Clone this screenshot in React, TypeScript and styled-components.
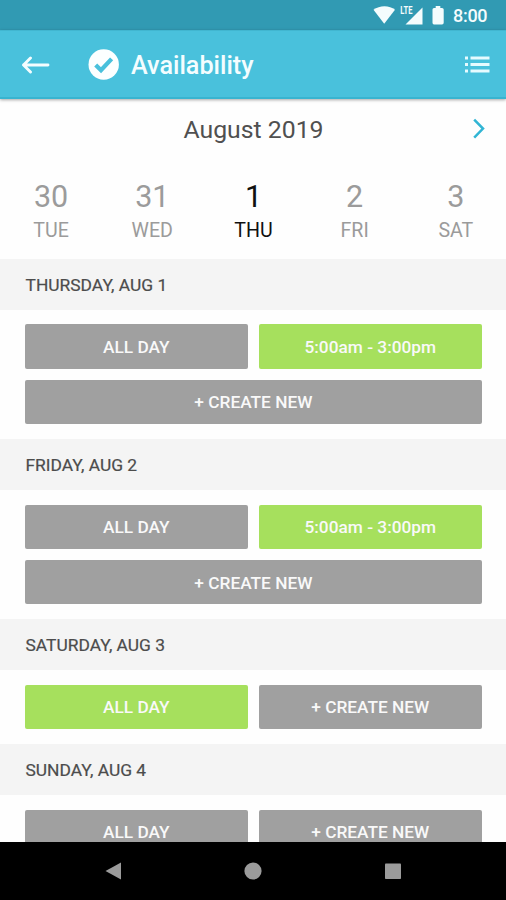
import React from "react";
import styled, { createGlobalStyle } from "styled-components";

const GlobalStyle = createGlobalStyle`
  * { box-sizing: border-box; }
  body { margin: 0; background: #fff; font-family: Roboto, "Liberation Sans", sans-serif; }
  button { font: inherit; border: 0; padding: 0; background: none; }
`;

const Screen = styled.div`
  width: 506px;
  height: 900px;
  display: flex;
  flex-direction: column;
  overflow: hidden;
  background: #fefefe;
`;

const StatusBar = styled.div`
  flex: none;
  height: 30px;
  display: flex;
  align-items: center;
  justify-content: flex-end;
  padding-right: 19px;
  background: #319ab3;
  color: #f4fcfd;
`;

const StatusIcons = styled.svg`
  display: block;
  margin-right: 8px;
`;

const Clock = styled.span`
  width: 34px;
  font-size: 18px;
  font-weight: 500;
  letter-spacing: -0.3px;
  line-height: 30px;
  padding-top: 2px;
  white-space: nowrap;
`;

const AppBar = styled.header`
  flex: none;
  height: 69px;
  display: flex;
  align-items: center;
  padding: 1px 16px 0 21px;
  background: #49c1dc;
  border-top: 1px solid #41b6d0;
  border-bottom: 2px solid #38b4d0;
  box-shadow: 0 1px 3px rgba(0, 0, 0, 0.35);
  z-index: 1;
`;

const IconButton = styled.button`
  display: flex;
`;

const NextButton = styled(IconButton)`
  padding-left: 7px;
`;

const Brand = styled.div`
  display: flex;
  align-items: center;
  gap: 12px;
  margin-left: 38px;
  flex: 1;
`;

const Title = styled.h1`
  margin: 0;
  padding-top: 2px;
  font-size: 25.2px;
  font-weight: 500;
  line-height: 30px;
  color: #f4fdff;
`;

const MonthBar = styled.div`
  flex: none;
  height: 60px;
  display: grid;
  grid-template-columns: 40px 1fr 40px;
  align-items: center;
`;

const Month = styled.h2`
  grid-column: 2;
  margin: 0;
  padding: 2px 0 0 1px;
  text-align: center;
  font-size: 24.8px;
  font-weight: 400;
  line-height: 30px;
  color: #505050;
`;

const Week = styled.div`
  flex: none;
  height: 99.5px;
  display: grid;
  grid-template-columns: repeat(5, 101.2px);
  padding: 20px 0 0 0.5px;
`;

const Day = styled.div<{ $active?: boolean }>`
  display: flex;
  flex-direction: column;
  align-items: center;
  color: ${(p) => (p.$active ? "#111" : "#9b9b9b")};
`;

const DayNumber = styled.span`
  font-size: 30.5px;
  line-height: 36px;
`;

const DayName = styled.span`
  margin-top: 4px;
  font-size: 19.6px;
  line-height: 24px;
`;

const Agenda = styled.main`
  flex: 1;
  min-height: 0;
  overflow: hidden;
`;

const DayHeading = styled.h3`
  margin: 0;
  height: 51.3px;
  padding-left: 25.5px;
  background: #f4f4f4;
  color: #4c4c4c;
  font-size: 17.4px;
  font-weight: 400;
  line-height: 52px;
  -webkit-text-stroke: 0.2px #4c4c4c;
`;

const Slots = styled.div`
  display: grid;
  grid-template-columns: 1fr 1fr;
  gap: 11.2px;
  padding: 14.5px 24.3px 14.7px 25px;
`;

const Slot = styled.button<{ $selected?: boolean; $wide?: boolean }>`
  height: 44.3px;
  border-radius: 2px;
  background: ${(p) => (p.$selected ? "#a6e05d" : "#a0a0a0")};
  color: #f9f9f9;
  font-size: 17.3px;
  font-weight: 500;
  line-height: 20px;
  padding-top: 1px;
  ${(p) => (p.$wide ? "grid-column: 1 / -1;" : "")}
`;

const NavBar = styled.nav`
  flex: none;
  height: 58px;
  display: flex;
  align-items: center;
  justify-content: space-between;
  padding: 0 104px;
  background: #000;
`;

const week = [
  { number: 30, name: "TUE" },
  { number: 31, name: "WED" },
  { number: 1, name: "THU", active: true },
  { number: 2, name: "FRI" },
  { number: 3, name: "SAT" },
];

type SlotData = { label: string; selected?: boolean; wide?: boolean };

const allDay = { label: "ALL DAY" };
const createNew = { label: "+ CREATE NEW" };
const shift = { label: "5:00am - 3:00pm", selected: true };

const agenda: { title: string; slots: SlotData[] }[] = [
  { title: "THURSDAY, AUG 1", slots: [allDay, shift, { ...createNew, wide: true }] },
  { title: "FRIDAY, AUG 2", slots: [allDay, shift, { ...createNew, wide: true }] },
  { title: "SATURDAY, AUG 3", slots: [{ ...allDay, selected: true }, createNew] },
  { title: "SUNDAY, AUG 4", slots: [allDay, createNew] },
];

const StatusGlyphs = () => (
  <StatusIcons width="72" height="30" viewBox="0 0 72 30" fill="currentColor">
    <path d="M0.5 9.8C6.5 4.9 16.5 4.9 22 9.8L11.2 23.8Z" />
    <path d="M49.5 7.5V24.5H32.5Z" />
    <path d="M62.7 6H67.3V8H69Q70.7 8 70.7 9.6V22.8Q70.7 24.5 69 24.5H61Q59.5 24.5 59.5 22.8V9.6Q59.5 8 61 8H62.7Z" />
    <text x="27.2" y="14.2" fontSize="10.5" fontWeight="700" textLength="12.2" lengthAdjust="spacingAndGlyphs">
      LTE
    </text>
  </StatusIcons>
);

const BackArrow = () => (
  <svg width="29" height="18" viewBox="0 0 29 18" fill="none" stroke="#f4fdff" strokeWidth="2.9" strokeLinecap="round" strokeLinejoin="round">
    <path d="M2.5 9H27M9.5 2L2.5 9L9.5 16" />
  </svg>
);

const CheckBadge = () => (
  <svg width="31" height="31" viewBox="0 0 31 31">
    <circle cx="15.7" cy="15.5" r="15.2" fill="#fcffff" />
    <path d="M7.7 16L13 21.2L23.6 9.9" fill="none" stroke="#49c1dc" strokeWidth="4.3" />
  </svg>
);

const ListIcon = () => (
  <svg width="25" height="18" viewBox="0 0 25 18" fill="#e6fbff">
    <path d="M0 0.5H3V3.5H0ZM0 7H3V10H0ZM0 13.5H3V16.5H0ZM5.5 0.5H24.5V3.5H5.5ZM5.5 7H24.5V10H5.5ZM5.5 13.5H24.5V16.5H5.5Z" />
  </svg>
);

const NextChevron = () => (
  <svg width="12" height="22" viewBox="0 0 12 22" fill="none" stroke="#31b5d4" strokeWidth="2.5">
    <path d="M1.2 1.6L10 10.6L1.2 19.6" />
  </svg>
);

export default function App() {
  return (
    <Screen>
      <GlobalStyle />
      <StatusBar>
        <StatusGlyphs />
        <Clock>8:00</Clock>
      </StatusBar>
      <AppBar>
        <IconButton aria-label="Back">
          <BackArrow />
        </IconButton>
        <Brand>
          <CheckBadge />
          <Title>Availability</Title>
        </Brand>
        <IconButton aria-label="List view">
          <ListIcon />
        </IconButton>
      </AppBar>
      <MonthBar>
        <Month>August 2019</Month>
        <NextButton aria-label="Next month">
          <NextChevron />
        </NextButton>
      </MonthBar>
      <Week>
        {week.map((day) => (
          <Day key={day.number} $active={day.active}>
            <DayNumber>{day.number}</DayNumber>
            <DayName>{day.name}</DayName>
          </Day>
        ))}
      </Week>
      <Agenda>
        {agenda.map((entry) => (
          <section key={entry.title}>
            <DayHeading>{entry.title}</DayHeading>
            <Slots>
              {entry.slots.map((slot) => (
                <Slot key={slot.label} $selected={slot.selected} $wide={slot.wide}>
                  {slot.label}
                </Slot>
              ))}
            </Slots>
          </section>
        ))}
      </Agenda>
      <NavBar>
        <svg width="18" height="18" viewBox="0 0 18 18" fill="#9b9b9b">
          <path d="M1.5 9L17 0.5V17.5Z" />
        </svg>
        <svg width="18" height="18" viewBox="0 0 18 18" fill="#9b9b9b">
          <circle cx="9" cy="9" r="8.6" />
        </svg>
        <svg width="18" height="18" viewBox="0 0 18 18" fill="#9b9b9b">
          <rect x="1" y="1.5" width="16" height="15.5" rx="0.8" />
        </svg>
      </NavBar>
    </Screen>
  );
}
